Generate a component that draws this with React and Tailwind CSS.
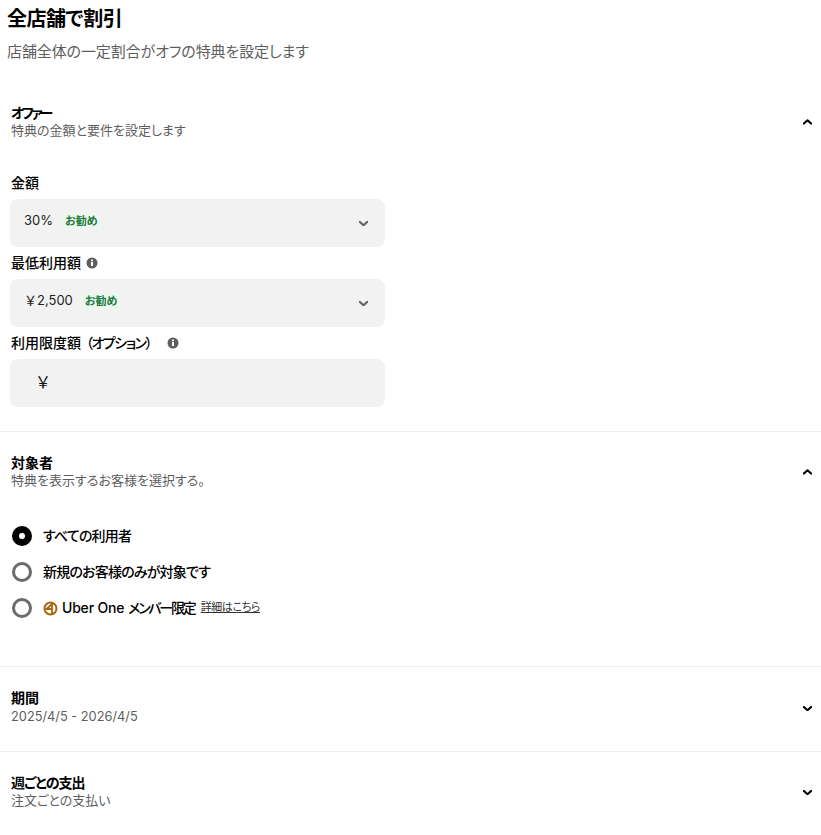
import React from "react";

const FONT = "font-['Inter','Noto_Sans_CJK_JP',sans-serif] [font-feature-settings:'palt']";

function Chevron({ up, className }) {
	return (
		<svg width="9" height="5.5" viewBox="0 0 10 6" className={className}>
			<path d={up ? "M1 5 L5 1.4 L9 5" : "M1 1 L5 4.6 L9 1"} fill="none" stroke="currentColor" strokeWidth="2.4" strokeLinecap="round" strokeLinejoin="round" />
		</svg>
	);
}

function Info() {
	return (
		<svg width="12" height="12" viewBox="0 0 12 12" className="shrink-0">
			<circle cx="6" cy="6" r="5.5" fill="#5e5e5e" />
			<rect x="5" y="5" width="2" height="4" fill="#fff" />
			<rect x="5" y="2.6" width="2" height="1.6" fill="#fff" />
		</svg>
	);
}

function UberOne() {
	return (
		<svg width="15" height="15" viewBox="0 0 15 15" className="shrink-0">
			<circle cx="7.5" cy="7.5" r="6" fill="none" stroke="#a6660f" strokeWidth="2" />
			<path d="M9 2v11M2.5 8H9M4 7.5l5-4.5" fill="none" stroke="#a6660f" strokeWidth="1.8" />
		</svg>
	);
}

function SectionHeader({ title, sub, open, titleClass = "" }) {
	return (
		<div className="flex items-center justify-between pr-[9px] pl-[11px]">
			<div className="flex flex-col">
				<span className={`text-sm leading-[17px] font-bold text-black ${titleClass}`}>{title}</span>
				<span className="text-[13px] leading-[18px] text-[#5e5e5e]">{sub}</span>
			</div>
			<Chevron up={open} className={open ? "mt-px text-black" : "mt-[2px] text-black"} />
		</div>
	);
}

function Badge({ children }) {
	return (
		<span className="rounded-sm bg-[#eef6f0] px-1 text-[11px] leading-[18px] font-semibold text-[#1c7a3e]">{children}</span>
	);
}

function Select({ children }) {
	return (
		<div className="flex h-12 w-[375px] items-center justify-between rounded-lg bg-[#f2f2f2] pr-[17px] pl-[14px]">
			<div className="flex items-center gap-2 pb-1">
				<span className="text-[13px] text-[#222]">{children}</span>
				<Badge>お勧め</Badge>
			</div>
			<Chevron className="mt-px text-[#5e5e5e]" />
		</div>
	);
}

function Radio({ checked, children }) {
	return (
		<div className="flex h-9 items-center gap-[11px] pl-3">
			{checked ? (
				<span className="flex size-5 items-center justify-center rounded-full bg-black">
					<span className="size-[6px] rounded-full bg-white" />
				</span>
			) : (
				<span className="size-5 rounded-full border-[3px] border-[#6b6b6b]" />
			)}
			<div className="flex items-center text-sm font-medium tracking-[-0.8px] text-black">{children}</div>
		</div>
	);
}

export default function App() {
	return (
		<div className={`h-[835px] w-[821px] overflow-hidden bg-white ${FONT}`}>
			<div className="pt-[6px] pl-[7px]">
				<h1 className="text-xl leading-[27px] font-bold tracking-[-0.5px] text-black">全店舗で割引</h1>
				<p className="mt-[7px] text-[15px] leading-[24px] tracking-[-0.1px] text-[#5e5e5e]">店舗全体の一定割合がオフの特典を設定します</p>
			</div>

			<section className="mt-[40px] border-b border-[#f0f0f0] pb-6">
				<SectionHeader title="オファー" sub="特典の金額と要件を設定します" titleClass="tracking-[-2.75px]" open />
				<div className="mt-[34px] pl-[10px]">
					<label className="mb-[6px] block pl-px text-sm leading-[20px] font-medium text-black">金額</label>
					<Select>30%</Select>
					<label className="flex h-8 items-center gap-[5px] pl-px text-sm font-medium text-black">
						最低利用額
						<Info />
					</label>
					<Select>
						<span className="[font-feature-settings:normal]">￥</span>2,500
					</Select>
					<label className="flex h-8 items-center gap-4 pl-px text-sm font-medium text-black">
						<span>
							利用限度額<span className="ml-[5px] tracking-[-1.5px]">（オプション）</span>
						</span>
						<Info />
					</label>
					<div className="flex h-12 w-[375px] items-center rounded-lg bg-[#f2f2f2] pb-[2px] pl-[27px] text-base text-[#111]">￥</div>
				</div>
			</section>

			<section className="border-b border-[#f0f0f0] pt-[22px] pb-[40px]">
				<SectionHeader title="対象者" sub="特典を表示するお客様を選択する。" open />
				<div className="mt-[29px]">
					<Radio checked>すべての利用者</Radio>
					<Radio>新規のお客様のみが対象です</Radio>
					<Radio>
						<UberOne />
						<span className="ml-1 tracking-[-0.2px]">Uber One</span>
						<span className="ml-1 tracking-[-2.2px]">メンバー限定</span>
						<a className="ml-[6px] text-[11px] font-normal tracking-[-0.4px] text-[#333] underline">詳細はこちら</a>
					</Radio>
				</div>
			</section>

			<section className="border-b border-[#f0f0f0] pt-[22px] pb-[25px]">
				<SectionHeader title="期間" sub={<span className="mt-[2px] block text-[12.8px]">2025/4/5 - 2026/4/5</span>} />
			</section>

			<section className="pt-[22px]">
				<SectionHeader title="週ごとの支出" titleClass="tracking-[-1px]" sub="注文ごとの支払い" />
			</section>
		</div>
	);
}
